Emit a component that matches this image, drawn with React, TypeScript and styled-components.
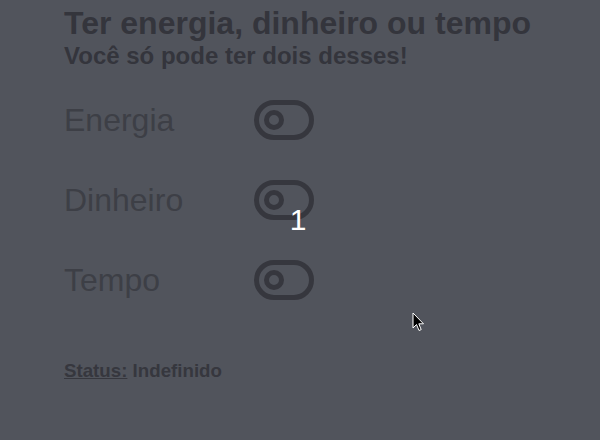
import React from "react";
import styled, { createGlobalStyle } from "styled-components";

const Global = createGlobalStyle`
  html, body { margin: 0; padding: 0; background: #51545c; }
  body { font-family: "Liberation Sans", Arial, sans-serif; width: 600px; height: 440px; overflow: hidden; }
`;

const Page = styled.main`
  position: relative;
  box-sizing: border-box;
  width: 600px;
  height: 440px;
  padding: 5px 64px 0;
  color: #34353c;
`;

const Title = styled.h1`
  margin: 0;
  font-size: 32px;
  font-weight: 700;
  line-height: 37px;
`;

const Subtitle = styled.h2`
  margin: 0;
  font-size: 24px;
  font-weight: 700;
  line-height: 27px;
`;

const Options = styled.div`
  display: grid;
  grid-template-columns: 190px 60px;
  row-gap: 20px;
  align-items: center;
  margin-top: 21px;
`;

const Label = styled.span`
  font-size: 32px;
  line-height: 37px;
  color: #3d3f46;
`;

const Toggle = styled.button`
  display: flex;
  width: 60px;
  height: 60px;
  padding: 0;
  border: 0;
  background: none;
  color: #36373e;
  cursor: pointer;
`;

const Status = styled.p`
  margin: 50px 0 0;
  font-size: 18.72px;
  font-weight: 700;
  line-height: 22px;
  color: #36373e;
`;

const StatusKey = styled.span`
  text-decoration: underline;
`;

const Counter = styled.div`
  position: absolute;
  left: 0;
  right: 4px;
  top: 203px;
  text-align: center;
  color: #ffffff;
  font-size: 30px;
  line-height: 34px;
  pointer-events: none;
`;

const Cursor = styled.svg`
  position: absolute;
  left: 412px;
  top: 312px;
`;

const ToggleIcon = () => (
  <svg width="60" height="60" viewBox="0 0 24 24" fill="none" stroke="currentColor" strokeWidth="2" strokeLinecap="round" strokeLinejoin="round">
    <rect x="1" y="5" width="22" height="14" rx="7" ry="7" />
    <circle cx="8" cy="12" r="3" />
  </svg>
);

const items = ["Energia", "Dinheiro", "Tempo"];

export default function App() {
  return (
    <>
      <Global />
      <Page>
        <Title>Ter energia, dinheiro ou tempo</Title>
        <Subtitle>Você só pode ter dois desses!</Subtitle>
        <Options>
          {items.map((it) => (
            <React.Fragment key={it}>
              <Label>{it}</Label>
              <Toggle aria-label={it}>
                <ToggleIcon />
              </Toggle>
            </React.Fragment>
          ))}
        </Options>
        <Status>
          <StatusKey>Status:</StatusKey> Indefinido
        </Status>
        <Counter>1</Counter>
        <Cursor width="14" height="22" viewBox="0 0 14 22">
          <path d="M1 1 L1 16 L4.5 12.5 L7 18.5 L9.2 17.6 L6.8 11.8 L11.5 11.8 Z" fill="#000" stroke="#fff" strokeWidth="1" strokeLinejoin="round" />
        </Cursor>
      </Page>
    </>
  );
}
